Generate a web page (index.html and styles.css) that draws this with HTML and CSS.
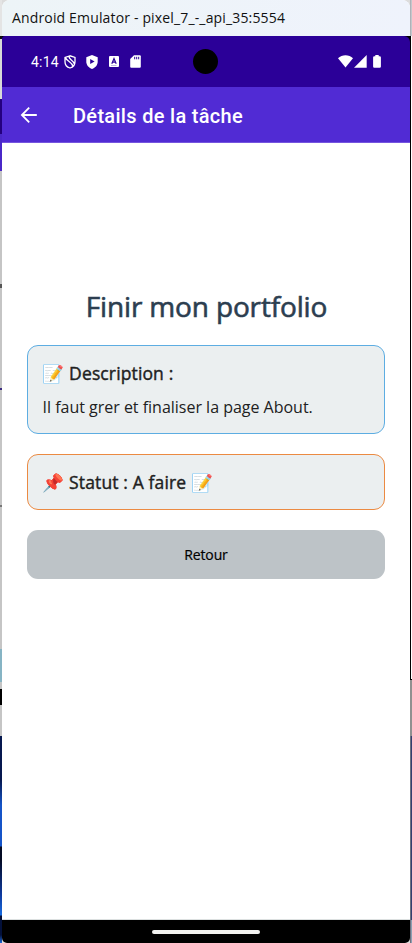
FILE: index.html
```html
<!DOCTYPE html>
<html lang="fr">
<head>
<meta charset="utf-8">
<title>Détails de la tâche</title>
<link rel="stylesheet" href="styles.css">
</head>
<body>
<div class="desktop">
  <div class="edge edge-left"></div>
  <div class="window">
    <header class="titlebar"><span class="titlebar-text">Android Emulator - pixel_7_-_api_35:5554</span></header>
    <div class="statusbar-wrap">
      <div class="statusbar">
        <span class="clock">4:14</span>
        <div class="notifications">
          <svg width="12" height="14" viewBox="0 0 12 14" fill="none" stroke="#fff" stroke-width="1.3"><path d="M6 .8 1 2.500v4.200C1 9.700 3.200 12.200 6 13c2.800-.8 5-3.300 5-6.300V2.500zM1.500 2.800C3 6.500 8.500 7 8.800 11.300M5 1.500c0 3 4 3.500 5.300 7.200"/></svg>
          <svg width="12" height="14" viewBox="0 0 12 14"><path fill="#fff" d="M6 0 .3 2.200v4.600C.3 10 2.700 13 6 14c3.300-1 5.700-4 5.700-7.200V2.200z"/><path fill="#2b0098" d="M4.200 3.900v5.200L8.600 6.500z"/></svg>
          <svg width="10" height="11" viewBox="0 0 10 11"><rect width="10" height="11" rx="1" fill="#fff"/><path d="m2.800 7.800 2.200-5.300 2.200 5.300M3.600 6.200h2.800" fill="none" stroke="#2b0098" stroke-width="1.200"/><path d="M2 9.500h5.500" stroke="#aa96d8" stroke-width=".7"/></svg>
          <svg width="11" height="13" viewBox="0 0 11 13"><path fill="#fff" d="M4 .3h5.800q1 0 1 1v10.400q0 1-1 1H1.200q-1 0-1-1V4z"/><path d="M4.700 1.800v2.500M6.700 1.800v2.500M8.700 1.800v2.500" stroke="#2b0098"/></svg>
        </div>
        <div class="camera"></div>
        <div class="signals">
          <svg width="15" height="13" viewBox="0 0 15 13"><path fill="#fff" d="M7.500 12.500 0 3.200C4-.7 11-.7 15 3.200z"/></svg>
          <svg width="13" height="13" viewBox="0 0 13 13"><path fill="#fff" d="M12.700 0v12.700H0z"/></svg>
          <svg class="battery" width="8" height="13" viewBox="0 0 8 13"><path fill="#fff" d="M2.300 0h3.400v1.200h1q1.200 0 1.200 1.200v9.100q0 1.200-1.200 1.200H1.300Q.1 12.700.1 11.500V2.400q0-1.200 1.200-1.200h1z"/></svg>
        </div>
      </div>
    </div>
    <nav class="appbar">
      <svg width="18" height="18" viewBox="0 0 18 18" fill="none" stroke="#fff" stroke-width="1.800"><path d="M16.800 9H2M9.200 1.700 1.900 9l7.300 7.300"/></svg>
      <h1 class="appbar-title">Détails de la tâche</h1>
    </nav>
    <main class="page">
      <h2 class="task-title">Finir mon portfolio</h2>
      <section class="card card-description">
        <h3 class="label">📝 Description :</h3>
        <p class="description">Il faut grer et finaliser la page About.</p>
      </section>
      <section class="card card-status"><h3 class="label">📌 Statut : A faire 📝</h3></section>
      <button class="back">Retour</button>
    </main>
    <footer class="navbar"><div class="handle"></div></footer>
  </div>
  <div class="edge edge-right"></div>
</div>
</body>
</html>
```
FILE: styles.css
```css
* { box-sizing: border-box; margin: 0; }
body { background: #dcdcdc; overflow: hidden; }
.desktop { display: grid; grid-template-columns: 2px 408px 2px; width: 412px; height: 943px; }
.edge-left {
  background: linear-gradient(#e4e4e4 0 36px, #111 36px 39px, #d8dad8 39px 99px, #24007e 99px 134px, #4a28c8 134px 171px,
    #c5c5c5 171px 284px, #555 284px 288px, #c5c5c5 288px 388px, #3c2c80 388px 390px, #c5c5c5 390px 505px, #777 505px 507px,
    #c5c5c5 507px 649px, #86b4c4 649px 682px, #c5c5c5 682px 689px, #000 689px 705px, #c5c5c5 705px 736px,
    #06184f 736px 780px, #1554c8 805px 846px, #040b24 847px 860px, #0e3aa0 895px, #176be0 915px, #03103a 916px 935px, #1b69d8 943px);
}
.edge-right {
  background:
    linear-gradient(#aeb2b8 0 36px, #000 36px 680px, #909090 680px 736px, #6e7280 736px) 0 0 / 1px 100% no-repeat,
    linear-gradient(#c4c7cc 0 36px, #fff 36px 679px, #000 679px 680px, #909090 680px 736px, #343f70 736px 920px, #8ba0b3 920px);
}
.window { display: flex; flex-direction: column; height: 943px; border-radius: 8px 8px 5px 5px; overflow: hidden; background: #fff; }
.titlebar { height: 36px; flex: none; padding-left: 10px; background: linear-gradient(90deg, #edf4f7, #eff3fc); font: 14px/35px "Open Sans", sans-serif; color: #111; white-space: nowrap; }
.titlebar-text { letter-spacing: .155px; }
.statusbar-wrap { height: 51px; flex: none; background: #000; }
.statusbar { position: relative; display: flex; align-items: center; height: 51px; padding: 0 29px; border-radius: 3px 6px 0 0; background: #2b0098; }
.clock { width: 33px; font: 14px/20px Roboto, sans-serif; color: #fff; letter-spacing: .2px; }
.notifications { display: grid; grid-template-columns: 22px 22px 21px 11px; align-items: center; justify-items: start; }
.notifications svg:nth-child(3) { margin-left: .5px; }
.notifications svg:nth-child(4) { margin-left: 1px; }
.camera { position: absolute; left: 191px; top: 13px; width: 25px; height: 25px; border-radius: 50%; background: #000; }
.signals { display: flex; align-items: center; gap: 1px; margin-left: auto; }
.battery { margin-left: 5px; }
svg { display: block; flex: none; }
.appbar { display: flex; align-items: center; gap: 35px; height: 56px; flex: none; padding-left: 18px; background: #512bd4; border-bottom: 1px solid #7555df; }
.appbar-title { font: 500 20px/28px Roboto, sans-serif; color: #fff; padding-top: 2px; letter-spacing: .31px; }
.page { flex: 1; padding: 143px 25px 0; font-family: "Open Sans", "Noto Color Emoji", sans-serif; }
.task-title { font-size: 28px; font-weight: 400; line-height: 40px; letter-spacing: -.15px; padding-left: 1px; text-align: center; color: #2c3e50; -webkit-text-stroke: .6px #2c3e50; white-space: nowrap; }
.card { width: 358px; border: 1px solid; border-radius: 11px; background: #ebeff0; padding-left: 14.500px; white-space: nowrap; }
.card-description { height: 89px; margin-top: 19px; padding-top: 15px; border-color: #5dade2; }
.card-status { height: 56px; margin-top: 20px; padding-top: 15px; border-color: #eb8a42; }
.label { font-size: 17.500px; font-weight: 400; line-height: 25px; letter-spacing: .13px; color: #212121; -webkit-text-stroke: .4px #212121; }
.description { font-size: 16px; line-height: 22px; margin-top: 10px; letter-spacing: -.01px; color: #212121; }
.back { display: block; width: 358px; height: 49px; margin-top: 20px; border: 0; border-radius: 11px; background: #bdc3c7; font: 14px/20px "Open Sans", sans-serif; letter-spacing: -.15px; color: #000; -webkit-text-stroke: .2px #000; }
.navbar { height: 24px; flex: none; display: flex; justify-content: center; padding-top: 10px; background: #000; border-top: 1px solid #dce0e0; }
.handle { width: 108px; height: 4px; border-radius: 2px; background: #f2f2f0; }
```
